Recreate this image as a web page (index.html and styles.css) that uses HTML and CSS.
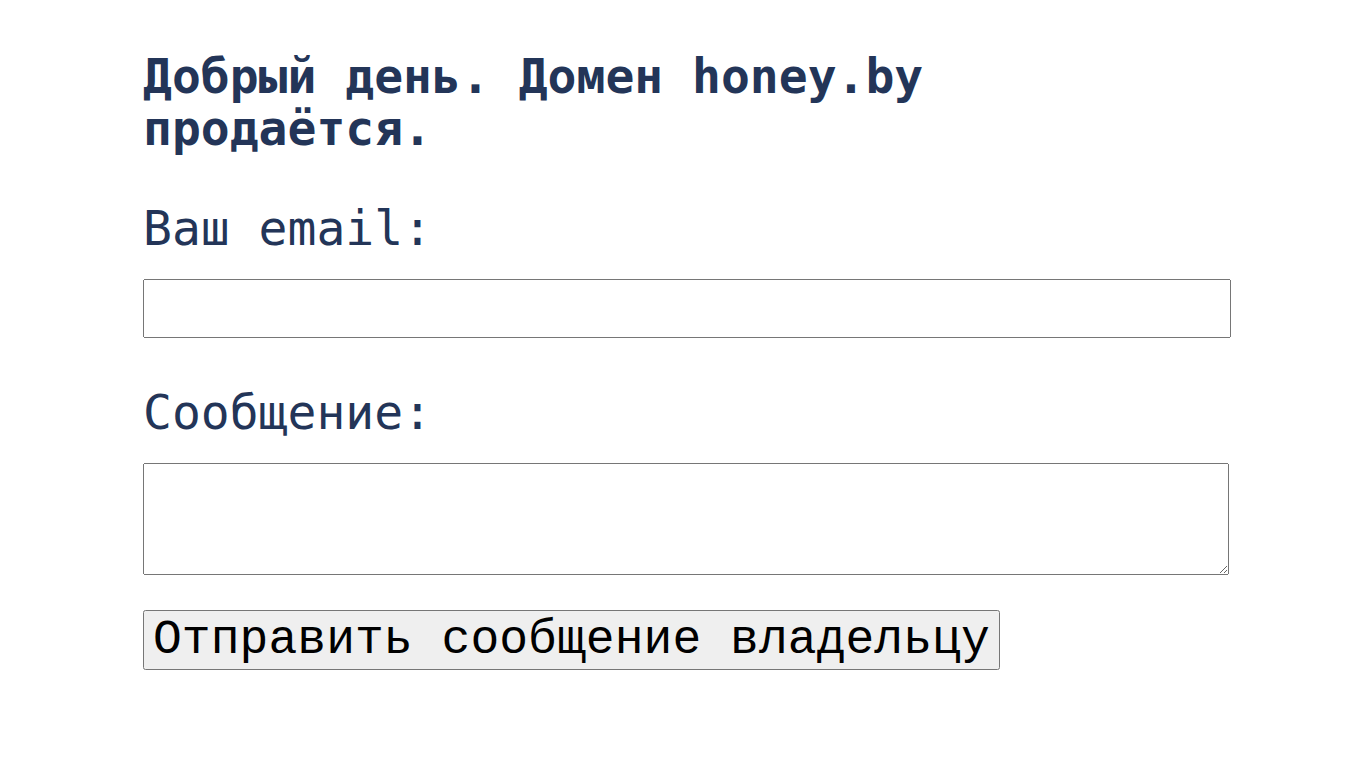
FILE: index.html
```html
<!DOCTYPE html>
<html lang="ru">
<head>
    <meta charset="UTF-8">
    <meta name="viewport" content="width=device-width, initial-scale=1.0">
    <title>honey.by продаётся</title>
    <link rel="stylesheet" href="styles.css">
</head>
<body>
    <div class="container">
        <h1>Добрый день. Домен honey.by продаётся.</h1>

        <!-- Contact form -->
        <form id="contactForm">
            <label for="email">Ваш email:</label>
            <input type="text" id="email" name="email">

            <label for="message">Сообщение:</label>
            <textarea id="message" name="message"></textarea>

            <button type="button">Отправить сообщение владельцу</button>
        </form>
    </div>
</body>
</html>
```

FILE: styles.css
```css
/* Basic Styles */
body {
    font-family: "DejaVu Sans Mono", monospace;
    margin: 0;
    padding: 0;
    background: #ffffff;
    color: #233558;
}
.container {
    max-width: 1080px;
    margin: 0 auto;
    padding: 50px 0;
}
h1 {
    font-size: 48px;
    line-height: 52px;
    font-weight: bold;
    margin: 0 0 46px;
}
label {
    display: block;
    font-size: 48px;
    margin-bottom: 23px;
}
input[type="text"] {
    display: block;
    width: 100%;
    height: 53px;
    margin: 0 0 46px;
}
textarea {
    display: block;
    width: 100%;
    height: 106px;
    margin: 0 0 35px;
}
button {
    font-family: "Liberation Mono", monospace;
    font-size: 48px;
    letter-spacing: 0.05px;
    padding: 1px 8px;
    color: #000000;
}
```
